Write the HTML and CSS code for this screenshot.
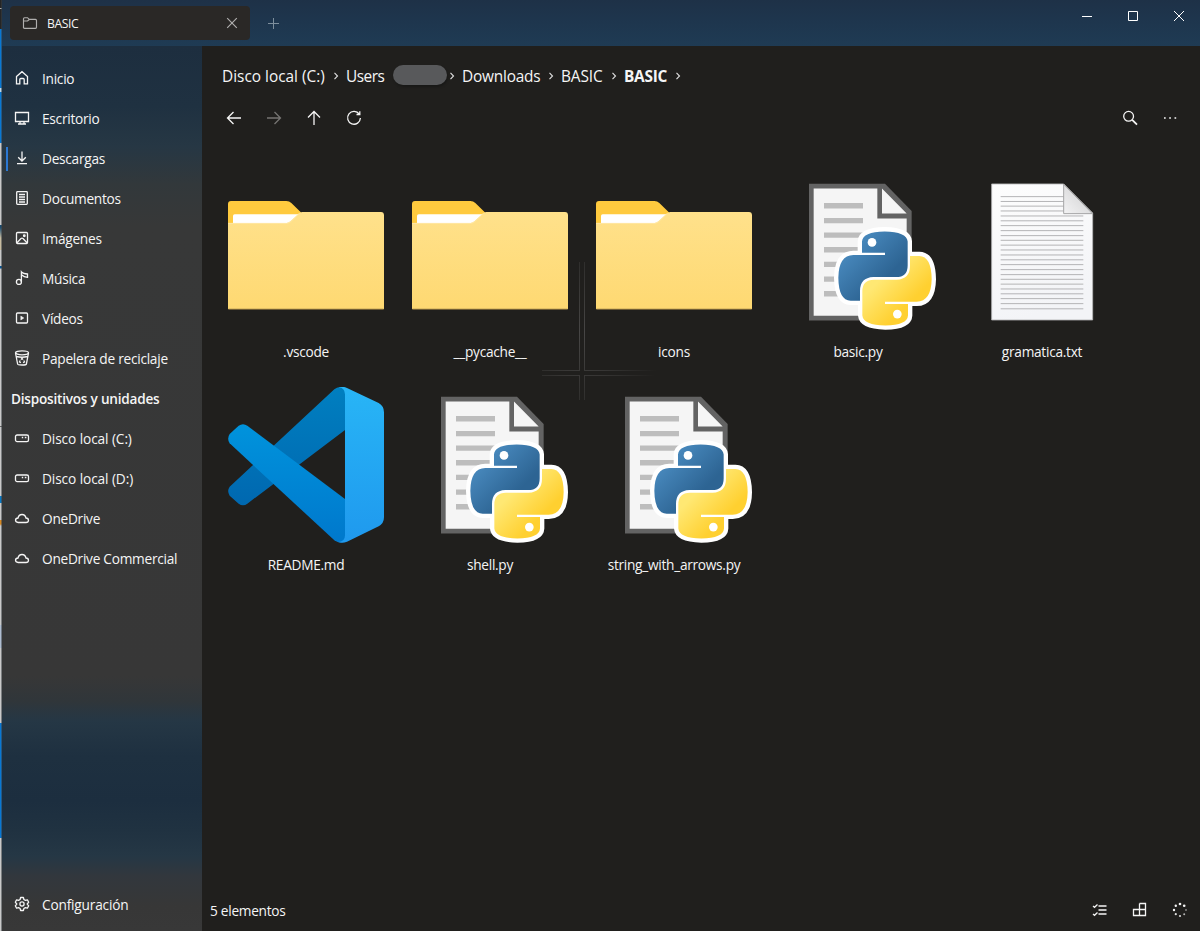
FILE: index.html
```
<!DOCTYPE html>
<html lang="es">
<head>
<meta charset="utf-8">
<title>BASIC</title>
<link rel="stylesheet" href="styles.css">
</head>
<body>
<svg class="defs" aria-hidden="true">
  <defs>
    <linearGradient id="gFolder" x1="0" y1="0" x2="0" y2="1"><stop offset="0" stop-color="#ffe18b"/><stop offset="1" stop-color="#fed972"/></linearGradient>
    <linearGradient id="gBlue" x1="0" y1="0" x2="1" y2="1"><stop offset=".15" stop-color="#4b8dc2"/><stop offset=".68" stop-color="#2d6493"/></linearGradient>
    <linearGradient id="gYellow" x1="0" y1="0" x2="1" y2="1"><stop offset=".3" stop-color="#ffe873"/><stop offset=".68" stop-color="#ffd030"/></linearGradient>
    <linearGradient id="gPaper" x1="0" y1="0" x2=".3" y2="1"><stop offset="0" stop-color="#fdfdfd"/><stop offset="1" stop-color="#f3f4f7"/></linearGradient>
    <linearGradient id="gFold" x1="0" y1="1" x2=".7" y2=".3"><stop offset="0" stop-color="#f3f3f4"/><stop offset="1" stop-color="#d6d6d7"/></linearGradient>
    <linearGradient id="gCodeA" x1="0" y1="0" x2="0" y2="1"><stop offset="0" stop-color="#007fc0"/><stop offset="1" stop-color="#0068b0"/></linearGradient>
    <linearGradient id="gCodeB" x1="0" y1="0" x2="0" y2="1"><stop offset="0" stop-color="#0093dc"/><stop offset="1" stop-color="#0078cc"/></linearGradient>
    <linearGradient id="gCodeC" x1="0" y1="0" x2="0" y2="1"><stop offset="0" stop-color="#28b5f6"/><stop offset="1" stop-color="#1f99ee"/></linearGradient>
    <path id="snake" d="M216 247V213Q218 184 284 183Q350 184 353 213V285Q353 320 318 320H250Q210 322 210 362V391H182Q146 390 145 322Q146 255 190 254H285V247Z"/>
    <symbol id="folder" viewBox="0 0 156 156"><g transform="translate(-8 16) scale(.33333)">
      <path fill="#ffca3e" d="M24 112V42Q24 33 33 33H199Q208 33 214 39L244 68V112Z"/>
      <path fill="#fff" d="M39 100V78Q39 73 44 73H236L204 102H39Z"/>
      <path fill="url(#gFolder)" d="M24 99H200Q206 98 211 94L236 71Q240 66 247 66H483Q492 66 492 76V357H24Z"/>
      <path fill="none" stroke="#ffecb4" stroke-width="2" d="M24 100H200Q207 99 212 95L238 70"/>
      <path fill="#8c753c" d="M25 356H491V359H25Z"/>
    </g></symbol>
    <symbol id="python" viewBox="0 0 156 156"><g transform="translate(10 -3.600) scale(.33333)">
      <path fill="#636363" d="M57 40H285L365 122V450H57Z"/>
      <path fill="#f5f5f5" d="M71 54H262V144H350V436H71ZM276 54L350 129H276Z"/>
      <path stroke="#bdbdbd" stroke-width="16" d="M102 106H219M102 150.500H219M102 194H219M102 238H219M102 282H219M102 326H219M102 370H219"/>
      <g fill="#fff" stroke="#fff" stroke-width="26" stroke-linejoin="round"><use href="#snake"/><use href="#snake" transform="rotate(180 285 324)"/></g>
      <use href="#snake" fill="url(#gBlue)"/>
      <path fill="url(#gYellow)" d="M354 401V435Q352 464 286 465Q220 464 217 435V363Q217 328 252 328H320Q360 326 360 286V257H388Q424 258 425 326Q424 393 380 394H285V401Z"/>
      <circle cx="246" cy="216" r="13" fill="#fff"/><circle cx="322" cy="431" r="13" fill="#fff"/>
    </g></symbol>
    <symbol id="text" viewBox="0 0 156 156"><g transform="translate(-174 -3.700) scale(.33333)">
      <path fill="url(#gPaper)" stroke="#b5b5b6" stroke-width="2.500" d="M605 41H821L908 128V449H605Z"/>
      <path stroke="#b4b4b6" stroke-width="3" d="M632 79H822M632 93.500H822M632 107.500H822M632 122H822M632 137H880M632 151.500H880M632 166H880M632 181H880M632 196H880M632 210H880M632 224.500H880M632 239H880M632 254H880M632 268.500H880M632 283H880M632 298H880M632 313H880M632 327H880M632 341.500H880M632 356H880M632 370.500H880M632 385H880M632 400H880M632 415.500H880"/>
      <path fill="url(#gFold)" stroke="#a5a5a6" stroke-width="3" d="M821 42V130H907Z"/>
    </g></symbol>
    <symbol id="code" viewBox="0 0 156 156"><g transform="translate(-8 -7) scale(.33333)">
      <path fill="url(#gCodeA)" d="M380 146L82 371Q69 381 56 371L29 347Q20 333 29 320L343 28Q358 16 380 24Z"/>
      <path fill="url(#gCodeB)" d="M56 137Q69 128 82 137L380 361V478Q365 496 343 481L29 190Q20 176 29 162Z"/>
      <path fill="url(#gCodeC)" d="M356 22Q368 18 381 24L476 69Q492 78 492 97V412Q492 430 476 439L381 485Q367 491 354 486Q375 486 375 466V43Q374 23 356 22Z"/>
    </g></symbol>
    <symbol id="disk" viewBox="0 0 16 16"><rect x="1.500" y="5" width="13" height="6.600" rx="1.600"/><path d="M7.800 7.500h1.400M10.800 7.500h1.600"/></symbol>
    <symbol id="cloud" viewBox="0 0 16 16"><path d="M4.200 12.500Q1.500 12.300 1.500 10.100 1.700 8.100 4 8 4.800 4.500 8 4.500q3.200 0 4 3.500 2.300.1 2.500 2.200Q14.400 12.400 12 12.500Z"/></symbol>
  </defs>
</svg>

<div class="window">
  <div class="backdrop-edge"></div>
  <div class="app">
    <header class="titlebar">
      <div class="tab">
        <svg class="ico dim" viewBox="0 0 16 16"><path d="M1.500 13V3.700q0-1 1-1h3L7.300 4.400H13.500q1 0 1 1V12.300q0 1-1 1H2.500q-1 0-1-1M1.700 6H5.500L7.300 4.500"/></svg>
        <span class="tab-name">BASIC</span>
        <svg class="ico dim" viewBox="0 0 16 16"><path d="M3.200 3.200l9.600 9.600M12.800 3.200l-9.600 9.600"/></svg>
      </div>
      <svg class="ico plus" viewBox="0 0 16 16"><path d="M8.500 3v11M3 8.500h11"/></svg>
      <div class="caption">
        <svg viewBox="0 0 12 12"><path d="M1 6.500h10"/></svg>
        <svg viewBox="0 0 12 12"><path d="M1.500 1.500h9v9h-9z"/></svg>
        <svg viewBox="0 0 12 12"><path d="M1 1l10 10M11 1L1 11"/></svg>
      </div>
    </header>
    <div class="body">
      <nav class="side">
        <a class="item"><svg class="ico" viewBox="0 0 16 16"><path d="M2.500 6.500L8 1.700l5.500 4.800V13.800h-3.300V9.500q0-1-1-1H6.800q-1 0-1 1v4.300H2.500Z"/></svg><span>Inicio</span></a>
        <a class="item"><svg class="ico" viewBox="0 0 16 16"><path d="M1.500 2.500h13v9h-13zM6 11.500v2.300M10 11.500v2.300M4 14h8"/></svg><span>Escritorio</span></a>
        <a class="item active"><svg class="ico" viewBox="0 0 16 16"><path d="M8 1.500V11M4.200 7.200L8 11l3.800-3.800M3 13.700h10"/></svg><span>Descargas</span></a>
        <a class="item"><svg class="ico" viewBox="0 0 16 16"><rect x="2.700" y="1.600" width="10.600" height="12.800" rx=".8"/><path d="M5 4.500h6M5 7h6M5 9.500h6M5 12h6"/></svg><span>Documentos</span></a>
        <a class="item"><svg class="ico" viewBox="0 0 16 16"><rect x="2.500" y="2.500" width="11" height="11" rx="1"/><path d="M3 12.800L7 8.500q1-.8 2 0l4 4.300"/><circle cx="10.300" cy="5.700" r=".8"/></svg><span>Imágenes</span></a>
        <a class="item"><svg class="ico" viewBox="0 0 16 16"><circle cx="4.900" cy="11.900" r="2.500"/><path d="M7.400 11.900V1.800Q9 3.800 13.500 4V7.300Q10 7.200 7.400 4.800"/></svg><span>Música</span></a>
        <a class="item"><svg class="ico" viewBox="0 0 16 16"><rect x="2.500" y="3" width="11" height="10" rx="1"/><path d="M6.800 6v4l3-2z" fill="currentColor" stroke-width=".5"/></svg><span>Vídeos</span></a>
        <a class="item"><svg class="ico" viewBox="0 0 16 16"><ellipse cx="8" cy="2.800" rx="6.500" ry="2"/><path d="M1.500 3L3.600 14q.2 1 4.400 1t4.400-1L14.500 3M2.300 6.500q5.700 1.500 11.400 0M7 9.700l1-1.400 1 1.400M9.800 10.500l.7 1.500-1.400.8M6.900 12.800l-1.400-.8.700-1.500"/></svg><span>Papelera de reciclaje</span></a>
        <h2 class="group">Dispositivos y unidades</h2>
        <a class="item drive"><svg class="ico"><use href="#disk"/></svg><span>Disco local (C:)</span></a>
        <a class="item drive"><svg class="ico"><use href="#disk"/></svg><span>Disco local (D:)</span></a>
        <a class="item"><svg class="ico"><use href="#cloud"/></svg><span>OneDrive</span></a>
        <a class="item"><svg class="ico"><use href="#cloud"/></svg><span>OneDrive Commercial</span></a>
        <a class="item settings"><svg class="ico" viewBox="0 0 16 16"><path d="M6.600 1.500h2.800l.5 2 1.500.9 2-.6 1.300 2.400L13.200 8l1.500 1.800-1.300 2.400-2-.6-1.500.9-.5 2H6.600l-.5-2-1.500-.9-2 .6-1.300-2.400L2.800 8 1.300 6.200l1.300-2.400 2 .6 1.500-.9Z" stroke-linejoin="round"/><circle cx="8" cy="8" r="2.100"/></svg><span>Configuración</span></a>
      </nav>
      <main class="main">
        <div class="crumbs">
          <span class="crumb c1">Disco local (C:)</span><svg class="chev" viewBox="0 0 6 10"><path d="M1.500 1.800L4.500 5l-3 3.200"/></svg>
          <span class="crumb c2">Users</span><i class="pill"></i><svg class="chev tight" viewBox="0 0 6 10"><path d="M1.500 1.800L4.500 5l-3 3.200"/></svg>
          <span class="crumb c3">Downloads</span><svg class="chev" viewBox="0 0 6 10"><path d="M1.500 1.800L4.500 5l-3 3.200"/></svg>
          <span class="crumb c4">BASIC</span><svg class="chev" viewBox="0 0 6 10"><path d="M1.500 1.800L4.500 5l-3 3.200"/></svg>
          <span class="crumb c5">BASIC</span><svg class="chev" viewBox="0 0 6 10"><path d="M1.500 1.800L4.500 5l-3 3.200"/></svg>
        </div>
        <div class="tools">
          <svg class="ico" viewBox="0 0 16 16"><path d="M15 8H1.500M7.500 2L1.500 8l6 6"/></svg>
          <svg class="ico off" viewBox="0 0 16 16"><path d="M1 8h13.500M8.500 2l6 6-6 6"/></svg>
          <svg class="ico" viewBox="0 0 16 16"><path d="M8 15V1.500M2 7.500l6-6 6 6"/></svg>
          <svg class="ico" viewBox="0 0 16 16"><path d="M13.300 4.200A6.400 6.400 0 1 0 14.400 8M13.800 1.200v3.300h-3.300"/></svg>
          <span class="spring"></span>
          <svg class="ico" viewBox="0 0 16 16"><circle cx="6.600" cy="6.300" r="4.900"/><path d="M10.200 9.900L15 14.700" stroke-width="1.800"/></svg>
          <svg class="ico" viewBox="0 0 16 16"><path d="M2 8h1.700M7.200 8h1.700M12.500 8h1.700" stroke-width="1.700"/></svg>
        </div>
        <div class="files">
          <figure><svg><use href="#folder"/></svg><figcaption>.vscode</figcaption></figure>
          <figure><svg><use href="#folder"/></svg><figcaption>__pycache__</figcaption></figure>
          <figure><svg><use href="#folder"/></svg><figcaption>icons</figcaption></figure>
          <figure><svg><use href="#python"/></svg><figcaption>basic.py</figcaption></figure>
          <figure><svg><use href="#text"/></svg><figcaption>gramatica.txt</figcaption></figure>
          <figure><svg><use href="#code"/></svg><figcaption>README.md</figcaption></figure>
          <figure><svg><use href="#python"/></svg><figcaption>shell.py</figcaption></figure>
          <figure><svg><use href="#python"/></svg><figcaption>string_with_arrows.py</figcaption></figure>
          <div class="reveal"><i></i><i></i><i></i><i></i></div>
        </div>
        <footer class="status">
          <span class="count">5 elementos</span>
          <svg class="ico" viewBox="0 0 16 16"><path d="M1 4l1.500 1.300L5.500 2.500M6.500 4h8M6.500 8h8M6.500 12h8M1 12l1.500 1.300 3-2.800" stroke-width="1.300"/></svg>
          <svg class="ico" viewBox="0 0 16 16"><path d="M7.500 1.500h6v12h-12v-6h12M7.500 1.500v12"/></svg>
          <svg class="ico dots" viewBox="0 0 16 16"><circle cx="8" cy="2" r="1.300"/><circle cx="12.200" cy="3.800" r="1.300"/><circle cx="14" cy="8" r="1" opacity=".45"/><circle cx="12.200" cy="12.200" r="1" opacity=".7"/><circle cx="8" cy="14" r="1.100" opacity=".85"/><circle cx="3.800" cy="12.200" r="1.100" opacity=".9"/><circle cx="2" cy="8" r="1.200"/><circle cx="3.800" cy="3.800" r="1.200"/></svg>
        </footer>
      </main>
    </div>
  </div>
</div>
</body>
</html>
```
FILE: styles.css
```
* { box-sizing: border-box; }
body { margin: 0; font-family: "Open Sans", "Noto Sans", sans-serif; font-size: 13.7px; color: #f5f5f5; background: #201f1d; }
.defs { position: absolute; width: 0; height: 0; }
.window { display: flex; width: 1200px; height: 931px; overflow: hidden; }
.backdrop-edge {
  flex: 0 0 2px;
  border-right: 1px solid rgba(60, 65, 70, .55);
  background: linear-gradient(#252525 0 8px, #aaa 8px 9px, #252525 9px 29px, #0878d4 29px 88px, #b8d7ec 88px 92px, #0878d4 92px 143px, #c9c9c9 143px 225px, #17496e 225px 227px, #c8bca0 238px 250px, #c9c9c9 250px 266px, #075493 266px 268px, #c9c9c9 269px 426px, #666 426px 427px, #c9c9c9 427px 496px, #0878c4 496px 503px, #c9c9c9 503px 520px, #d88820 520px 524px, #c9c9c9 526px 625px, #afbdd1 625px 648px, #c9c9c9 648px 723px, #0878d4 723px 838px, #c9c9c9 838px);
}
.app { flex: 1; min-width: 0; display: flex; flex-direction: column; }
.ico { flex: none; width: 16px; height: 16px; fill: none; stroke: currentColor; stroke-width: 1.3; }
.titlebar {
  flex: 0 0 46px; display: flex; align-items: flex-start; padding: 6px 0 0 8px;
  background: linear-gradient(#1e3147, #1e364e 50%, #1f3b54);
}
.tab { width: 240px; height: 34px; display: flex; align-items: center; padding: 0 10px 0 12px; background: #2a2826; border-radius: 4px; font-size: 12.2px; letter-spacing: -.4px; }
.tab-name { flex: 1; margin-left: 9px; }
.dim { color: #b0afae; stroke-width: 1.15; }
.plus { margin: 9px 0 0 15px; color: #7d8e9c; stroke-width: 1; }
.caption { margin: 4px 15px 0 auto; display: flex; gap: 34px; }
.caption svg { width: 12px; height: 12px; fill: none; stroke: #fff; stroke-width: 1; }
.body { flex: 1; min-height: 0; display: flex; }
.side {
  width: 200px; padding-top: 13px; display: flex; flex-direction: column;
  background: linear-gradient(#1d2e3f 0, #1f3141 60px, #263744 100px, #32383b 138px, #373838 180px, #373737 630px, #30363a 655px, #253745 675px, #1e3040 710px, #1c2e3f 755px, #203241 785px, #253745 810px, #32373d 830px, #373737 860px, #383838);
}
.item { position: relative; flex: 0 0 40px; display: flex; align-items: center; gap: 12px; padding-left: 12px; line-height: 20px; letter-spacing: -.27px; white-space: nowrap; }
.item span { margin-top: -1px; }
.drive { letter-spacing: -.1px; }
.item .ico { margin-top: -2px; }
.item.active::before { content: ""; position: absolute; left: 4px; top: 8px; width: 2px; height: 24px; background: #2c78d2; }
.group { flex: 0 0 40px; margin: 0; padding-left: 9px; line-height: 40px; font-size: 13.6px; font-weight: 600; letter-spacing: -.22px; }
.settings { margin-top: auto; margin-bottom: 6px; letter-spacing: -.2px; }
.main { flex: 1; min-width: 0; display: flex; flex-direction: column; background: #201f1d; }
.crumbs { display: flex; align-items: center; height: 40px; margin-top: 10px; padding-left: 20px; font-size: 15.4px; letter-spacing: -.2px; white-space: nowrap; }
.crumb { flex: none; }
.c1 { width: 103px; letter-spacing: 0; } .c2 { width: 38px; letter-spacing: -.5px; } .c3 { width: 78px; } .c4 { width: 42px; letter-spacing: -.1px; } .c5 { width: 43px; font-weight: 700; letter-spacing: -.25px; }
.chev { flex: none; width: 6px; height: 10px; margin: 0 7px 0 8px; fill: none; stroke: #ddd; stroke-width: 1.15; }
.chev.tight { margin-left: 2px; }
.pill { flex: none; width: 54px; height: 20px; margin: -3px 0 0 9px; border-radius: 10px; background: #58595b; box-shadow: 1px 2px 2px #191918; }
.tools { display: flex; align-items: center; height: 42px; margin-top: 1px; padding: 0 22px 0 24px; gap: 24px; }
.off { color: #757472; }
.spring { flex: 1; }
.files { position: relative; display: grid; grid-template-columns: repeat(5, 184px); grid-auto-rows: 213px; padding: 35px 0 0 12px; }
figure { margin: 0; display: flex; flex-direction: column; align-items: center; }
figure svg { flex: none; width: 156px; height: 156px; }
figcaption { height: 20px; margin-top: 12px; line-height: 20px; letter-spacing: -.28px; }
.reveal { position: absolute; left: 340px; top: 123px; width: 116px; height: 139px; display: grid; grid-template: 109px 25px / 38px 74px; gap: 4px; mask-image: radial-gradient(ellipse 80px 115px at 40px 70px, #000, transparent); }
.reveal i { border: 0 solid #484746; }
.reveal i:nth-child(1) { border-width: 0 1px 1px 0; }
.reveal i:nth-child(2) { border-width: 0 0 1px 1px; }
.reveal i:nth-child(3) { border-width: 1px 1px 0 0; }
.reveal i:nth-child(4) { border-width: 1px 0 0 1px; }
.status { margin-top: auto; height: 42px; display: flex; align-items: center; gap: 24px; padding: 0 12px 0 8px; }
.count { flex: 1; line-height: 20px; padding-top: 1px; letter-spacing: -.28px; }
.dots { fill: currentColor; stroke: none; }
```
